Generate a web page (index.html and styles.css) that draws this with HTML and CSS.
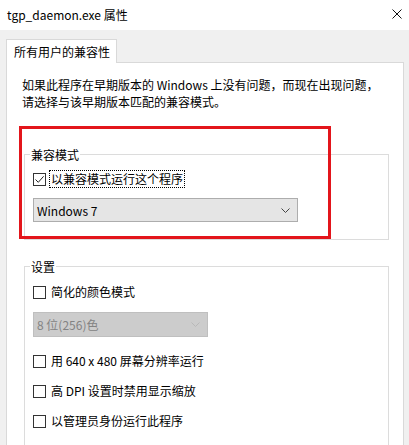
FILE: index.html
```html
<!DOCTYPE html>
<html lang="zh-CN">
<head>
<meta charset="utf-8">
<title>tgp_daemon.exe 属性</title>
<link rel="stylesheet" href="styles.css">
</head>
<body>
<div class="window">
  <div class="titlebar">
    <span class="title">tgp_daemon.exe 属性</span>
    <svg class="close" width="10" height="10" viewBox="0 0 10 10"><path d="M0.5 0.5 L9.5 9.5 M9.5 0.5 L0.5 9.5" stroke="#111" stroke-width="1" fill="none"/></svg>
  </div>
  <div class="body">
    <div class="tabs">
      <div class="tab">所有用户的兼容性</div>
    </div>
    <div class="panel">
      <p class="desc">如果此程序在早期版本的 Windows 上没有问题，而现在出现问题，<br>请选择与该早期版本匹配的兼容模式。</p>

      <fieldset class="group compat">
        <legend>兼容模式</legend>
        <label class="row">
          <span class="box checked"><svg width="11" height="11" viewBox="0 0 11 11"><path d="M1.5 5.5 L4.3 8.3 L9.6 2.3" stroke="#222" stroke-width="1" fill="none"/></svg></span>
          <span class="text focus">以兼容模式运行这个程序</span>
        </label>
        <div class="select wide">
          <span>Windows 7</span>
          <svg width="9" height="5" viewBox="0 0 9 5"><path d="M0.5 0.5 L4.5 4.5 L8.5 0.5" stroke="#444" stroke-width="1" fill="none"/></svg>
        </div>
      </fieldset>

      <fieldset class="group settings">
        <legend>设置</legend>
        <label class="row">
          <span class="box"></span>
          <span class="text">简化的颜色模式</span>
        </label>
        <div class="select narrow disabled">
          <span>8 位(256)色</span>
          <svg width="9" height="5" viewBox="0 0 9 5"><path d="M0.5 0.5 L4.5 4.5 L8.5 0.5" stroke="#b8b8b8" stroke-width="1" fill="none"/></svg>
        </div>
        <label class="row spaced">
          <span class="box"></span>
          <span class="text">用 640 x 480 屏幕分辨率运行</span>
        </label>
        <label class="row spaced">
          <span class="box"></span>
          <span class="text">高 DPI 设置时禁用显示缩放</span>
        </label>
        <label class="row spaced">
          <span class="box"></span>
          <span class="text">以管理员身份运行此程序</span>
        </label>
      </fieldset>

      <div class="highlight"></div>
    </div>
  </div>
</div>
</body>
</html>
```

FILE: styles.css
```css
html, body {
  margin: 0;
  padding: 0;
}
body {
  background: #f0f0f0;
  font-family: "Segoe UI", "Noto Sans CJK SC", "Noto Sans", sans-serif;
  font-size: 12px;
  color: #000;
  overflow: hidden;
}
.window {
  width: 409px;
  height: 445px;
  overflow: hidden;
}
.titlebar {
  height: 30px;
  background: #fff;
  display: flex;
  align-items: center;
  justify-content: space-between;
  padding: 0 7px 2px 7px;
  box-sizing: border-box;
}
.title {
  font-size: 12px;
  line-height: 17px;
}
.close {
  display: block;
}
.body {
  background: #f0f0f0;
  padding: 9px 5px 0 6px;
}
.tabs {
  display: flex;
}
.tab {
  width: 111px;
  height: 24px;
  box-sizing: border-box;
  background: #fff;
  border: 1px solid #d9d9d9;
  border-bottom: none;
  padding-left: 7px;
  line-height: 23px;
  margin-bottom: -1px;
  position: relative;
  z-index: 1;
}
.panel {
  position: relative;
  background: #fff;
  border: 1px solid #d9d9d9;
  height: 400px;
  padding: 0 14px 0 17px;
}
.desc {
  margin: 0 0 0 -2px;
  padding-top: 13px;
  line-height: 17px;
}
.group {
  margin: 0;
  border: 1px solid #dcdcdc;
  padding: 0 8px 0 8px;
  min-width: 0;
}
.group legend {
  padding: 0 1px;
  margin-left: -3px;
  line-height: 17px;
}
.compat {
  margin-top: 36px;
  padding-bottom: 17px;
}
.settings {
  margin-top: 18px;
  padding-bottom: 40px;
}
.row {
  display: flex;
  align-items: center;
  height: 18px;
  margin-top: 7px;
}
.settings .row:first-of-type {
  margin-top: 8px;
}
.row.spaced {
  margin-top: 12px;
}
.settings .select + .row.spaced {
  margin-top: 15px;
}
.box {
  width: 13px;
  height: 13px;
  box-sizing: border-box;
  border: 1px solid #333;
  background: #fff;
  display: flex;
  align-items: center;
  justify-content: center;
  flex: none;
}
.text {
  margin-left: 3px;
  line-height: 16px;
  padding: 0 1px;
  border: 1px solid transparent;
}
.text.focus {
  border: 1px dotted #000;
}
.select {
  margin-top: 10px;
  height: 24px;
  box-sizing: border-box;
  border: 1px solid #adadad;
  background: #e5e5e5;
  display: flex;
  align-items: center;
  justify-content: space-between;
  padding: 0 7px 0 3px;
  font-size: 12px;
}
.select.wide {
  width: 265px;
}
.select.narrow {
  width: 175px;
  margin-top: 11px;
  height: 25px;
}
.select.disabled {
  background: #cccccc;
  border-color: #bfbfbf;
  color: #838383;
}
.highlight {
  position: absolute;
  left: 12px;
  top: 63px;
  width: 312px;
  height: 113px;
  box-sizing: border-box;
  border: 3px solid #e3151b;
  pointer-events: none;
}
```
